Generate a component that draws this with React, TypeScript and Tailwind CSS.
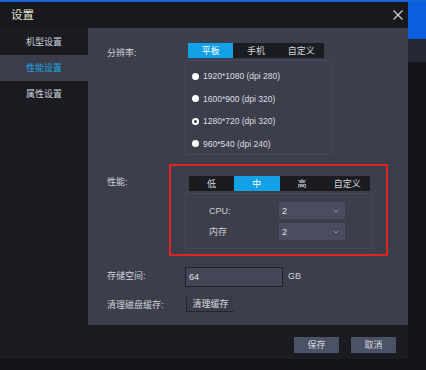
import { ChevronDown } from "lucide-react";

const resolutions = [
  { label: "1920*1080 (dpi 280)", selected: false },
  { label: "1600*900 (dpi 320)", selected: false },
  { label: "1280*720 (dpi 320)", selected: true },
  { label: "960*540 (dpi 240)", selected: false },
];

const Tabs = ({ items, active, w }: { items: string[]; active: number; w: string }) => (
  <div className={`flex h-[15px] bg-[#1b1c22] ${w}`}>
    {items.map((t, i) => (
      <div
        key={t}
        className={
          i === active
            ? "flex-1 flex items-center justify-center bg-[#12a0e6] text-white"
            : "flex-1 flex items-center justify-center text-[#d6d7dc]"
        }
      >
        {t}
      </div>
    ))}
  </div>
);

const Select = ({ value }: { value: string }) => (
  <div className="w-[66px] h-[17px] bg-[#4a4d5d] flex items-center justify-between pl-[3px] pr-[5px] text-[#e2e3e8]">
    <span>{value}</span>
    <ChevronDown size={8} strokeWidth={2} className="text-[#b9bcc6]" />
  </div>
);

const App = () => {
  return (
    <div
      className="w-[426px] h-[370px] bg-[#131419] overflow-hidden text-[9px] leading-[12px] text-[#cfd1d8]"
      style={{ fontFamily: '"Liberation Sans", "Noto Sans CJK SC", sans-serif' }}
    >
      {/* top line */}
      <div className="h-[2px] bg-[#1565d8]" />

      <div className="flex">
        {/* Window */}
        <div className="w-[408px] h-[357px] bg-[#1b1c22] flex flex-col">
          {/* Title bar */}
          <div className="h-[26px] flex items-center justify-between pl-[11px] pr-[1px] bg-[#18191e]">
            <span className="text-[11.5px] text-[#e7e2cc]">设置</span>
            <svg width="18" height="18" viewBox="0 0 18 18" className="text-[#cfd0d4]">
              <path d="M4.5 4.5 L13.5 13.5 M13.5 4.5 L4.5 13.5" stroke="currentColor" strokeWidth="1.2" />
            </svg>
          </div>

          <div className="flex flex-1">
            {/* Sidebar */}
            <div className="w-[88px] flex flex-col pt-[1px]">
              <div className="h-[26px] flex items-center justify-center">机型设置</div>
              <div className="h-[26px] flex items-center justify-center bg-[#3b3d4a] text-[#1ea4e0]">性能设置</div>
              <div className="h-[26px] flex items-center justify-center">属性设置</div>
            </div>

            {/* Right side */}
            <div className="flex-1 flex flex-col">
              <div className="h-[297px] bg-[#3c3e4b] pt-[15px]">
                {/* Resolution */}
                <div className="flex">
                  <div className="w-[97px] pl-[19px] pt-[4px]">分辨率:</div>
                  <div className="flex flex-col">
                    <div className="ml-[3px]">
                      <Tabs items={["平板", "手机", "自定义"]} active={0} w="w-[136px]" />
                    </div>
                    <div className="mt-[2px] w-[147px] h-[95px] border border-[#45485a] flex flex-col pl-[6px] pt-[9px] gap-[10.5px]">
                      {resolutions.map((r) => (
                        <div key={r.label} className="flex items-center gap-[4px] h-[12px] text-[8.5px] text-[#dcdde2]">
                          {r.selected ? (
                            <span className="w-[7px] h-[7px] rounded-full bg-white flex items-center justify-center">
                              <span className="w-[3px] h-[3px] rounded-full bg-[#3c3e4b]" />
                            </span>
                          ) : (
                            <span className="w-[7px] h-[7px] rounded-full bg-white" />
                          )}
                          <span>{r.label}</span>
                        </div>
                      ))}
                    </div>
                  </div>
                </div>

                {/* Performance */}
                <div className="flex mt-[9px]">
                  <div className="w-[81px] pl-[19px] pt-[12px]">性能:</div>
                  <div className="w-[219px] h-[92px] border-2 border-[#e3241e] pl-[14px] pt-[10px]">
                    <div className="ml-[4px]">
                      <Tabs items={["低", "中", "高", "自定义"]} active={1} w="w-[181px]" />
                    </div>
                    <div className="mt-[2px] w-[188px] h-[56px] border border-[#45485a] pt-[8px] flex flex-col gap-[4px]">
                      <div className="flex items-center">
                        <div className="w-[93px] pl-[23px]">CPU:</div>
                        <Select value="2" />
                      </div>
                      <div className="flex items-center">
                        <div className="w-[93px] pl-[23px]">内存</div>
                        <Select value="2" />
                      </div>
                    </div>
                  </div>
                </div>

                {/* Storage */}
                <div className="flex items-center mt-[11px]">
                  <div className="w-[97px] pl-[19px] mb-[2px]">存储空间:</div>
                  <div className="w-[98px] h-[20px] bg-[#434656] border border-[#202128] flex items-center pl-[3px] text-[#e0e1e6]">
                    64
                  </div>
                  <span className="ml-[5px] mb-[2px]">GB</span>
                </div>

                {/* Clear cache */}
                <div className="flex items-center mt-[10px]">
                  <div className="w-[98px] pl-[19px]">清理磁盘缓存:</div>
                  <button className="w-[48px] h-[15px] bg-[#3a3c48] border-l border-b border-[#24252d] flex items-center justify-center text-[#dcdde2]">
                    清理缓存
                  </button>
                </div>
              </div>

              {/* Footer */}
              <div className="flex-1 flex items-start justify-end gap-[12px] pr-[12px] pt-[12px]">
                <button className="w-[45px] h-[16px] bg-[#4c5266] flex items-center justify-center text-[#d3d6df]">保存</button>
                <button className="w-[45px] h-[16px] bg-[#4c5266] flex items-center justify-center text-[#d3d6df]">取消</button>
              </div>
            </div>
          </div>
        </div>

        {/* Right strip */}
        <div className="flex-1 flex flex-col">
          <div className="h-[37px] bg-[#0c5fe0]" />
          <div className="h-[23px] bg-[#262833]" />
        </div>
      </div>
    </div>
  );
};

export default App;
